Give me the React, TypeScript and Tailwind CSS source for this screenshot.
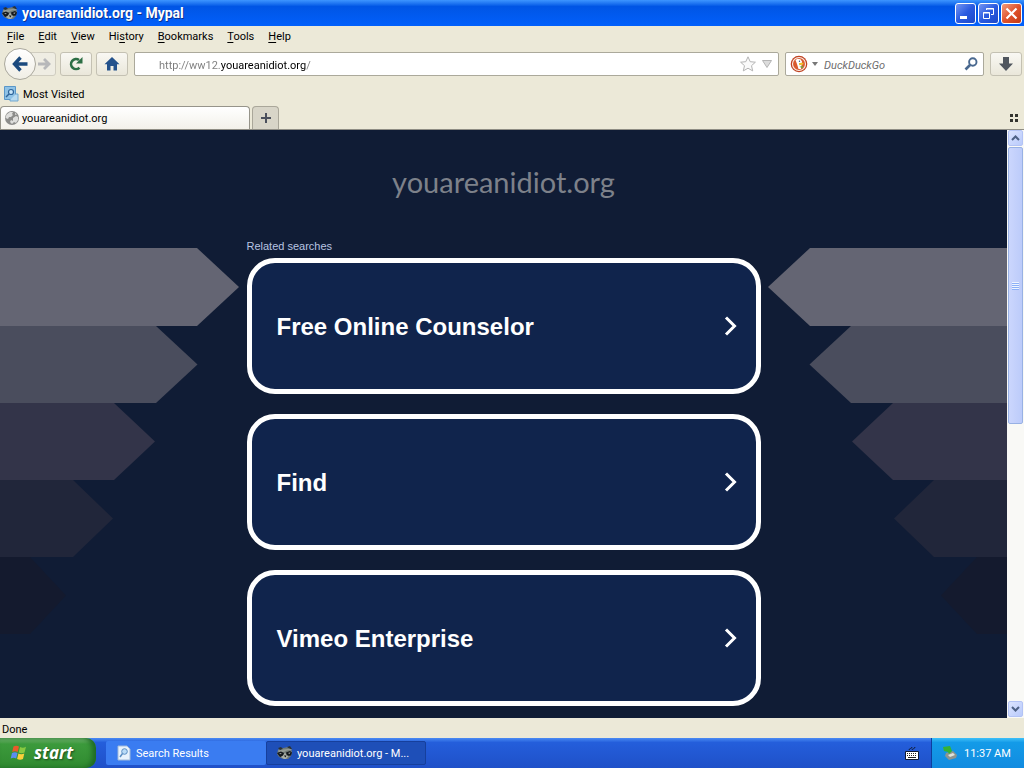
import React from 'react';

const menus = ['File', 'Edit', 'View', 'History', 'Bookmarks', 'Tools', 'Help'];
const mnemonicAt: Record<string, number> = { History: 2 };
const results = ['Free Online Counselor', 'Find', 'Vimeo Enterprise'];

function Raccoon() {
  return (
    <svg viewBox="0 0 16 16" className="size-4 shrink-0" aria-hidden="true">
      <path d="M1 5l2-2h3l5-1 3 1 1 4-1 4-3 3H6L2 12 0 9z" fill="#6f7975" />
      <path d="M1 3l3-1 2 2-3 1zM10 2l3-1 2 3-2 0z" fill="#2a3236" />
      <path d="M1 5.500l5-1 7-.8 2 1.300-5 .6-3 1.400-5 .6z" fill="#929a94" />
      <path d="M0 8l4-1.500L7 8l-1 3-3 1zM9 7.500L13 6l2 1.500-1 3-4 .5z" fill="#14191d" />
      <path d="M2 8.500l2.500-.3-.5 1zM11 8l2.500-.5-1 1.200z" fill="#d8dcd4" />
      <path d="M6.500 10L8 7.500 9.500 10l2 1-2.500 3H7L4 12z" fill="#a9b0a8" />
      <path d="M7 10.500h2.500L8.300 12.500z" fill="#111" />
    </svg>
  );
}

function Globe() {
  return (
    <svg viewBox="0 0 16 16" className="size-4 shrink-0" aria-hidden="true">
      <circle cx="8" cy="8" r="7" fill="#8c8c8a" />
      <path d="M2.500 4.500L6 2l3 0-1 2 1 1-2 2-2 0-1 2-2.500-1zM9 8l3-2 2 1 0 3-2 3-2-1-2 2-2-2 1-2 2 1z" fill="#dededc" />
      <path d="M11 2.500l2 2-2 .5z" fill="#d4d4d2" />
    </svg>
  );
}

function Duck() {
  return (
    <svg viewBox="0 0 18 18" className="size-[18px]" aria-hidden="true">
      <circle cx="9" cy="9" r="8.300" fill="#bf4322" />
      <circle cx="9" cy="9" r="6.500" fill="#da5a2e" stroke="#fbeee8" strokeWidth="1.100" />
      <path d="M5.500 5l2-1.200 3 .5 1.500 2.200-.3 2.500-.7 5-2.500 0-1.500-5z" fill="#fff" />
      <circle cx="9.500" cy="6.300" r=".7" fill="#28517c" />
      <path d="M9 8l4.500-.2-.3 1.800-4 .7z" fill="#f0c02c" />
      <path d="M9.500 11.800l3.500-1-.4 2.800z" fill="#6ba544" />
    </svg>
  );
}

function WindowsFlag() {
  return (
    <svg viewBox="0 0 18 18" className="size-[18px]" aria-hidden="true">
      <path d="M3.500 2.500c2-1.200 3.800-1 5.500 0L7.700 8C6 7 4 7 2.200 8z" fill="#ea5a2b" />
      <path d="M10 3c2 1 3.800 1 6-.2L14.500 8.500c-2 1-4 .9-5.800 0z" fill="#88c941" />
      <path d="M2 9c2-1 3.800-1 5.500 0l-1.300 5.500c-1.700-1-3.600-1-5.500 0z" fill="#5b8df0" />
      <path d="M8.400 9.500c2 1 3.900 1 5.900 0L13 15c-2 1-4 1-5.900 0z" fill="#fbd03b" />
    </svg>
  );
}

function Arrows({ side }: { side: 'left' | 'right' }) {
  return (
    <svg
      viewBox="0 0 240 388"
      aria-hidden="true"
      className={
        side === 'left'
          ? 'absolute left-0 top-[118px] h-[388px] w-[240px]'
          : 'absolute right-0 top-[118px] h-[388px] w-[240px] -scale-x-100'
      }
    >
      <path d="M0 0H197L239 39L197 78H0z" fill="#646573" />
      <path d="M0 78H156L197.500 116.500L156 155H0z" fill="#4a4d5d" />
      <path d="M0 155H114L155 193.500L114 232H0z" fill="#333449" />
      <path d="M0 232H73L113 270.500L73 309H0z" fill="#21263a" />
      <path d="M0 309H30L66 347.500L30 386H0z" fill="#141a2e" />
    </svg>
  );
}

const toolButton =
  'flex h-6 w-8 items-center justify-center rounded-[3px] border border-[#c4c1b3] bg-linear-to-b from-[#f9f8f3] to-[#eae7da]';
const captionButton =
  'flex size-[21px] items-center justify-center rounded-[3px] border border-white';
const scrollButton =
  'flex h-4 w-[15px] items-center justify-center rounded-[2px] border border-[#b3c3f5] bg-linear-to-br from-[#dbe4ff] to-[#b9cafb]';

function TitleBar() {
  return (
    <header className="flex h-[26px] shrink-0 items-center gap-1 bg-linear-to-b from-[#3d95ff] via-[#0055e5] via-25% to-[#0260fb] pl-0.5 pr-0.5">
      <Raccoon />
      <h1 className="flex-1 font-['Roboto','Noto_Sans',sans-serif] text-[14px] font-bold text-white [text-shadow:1px_1px_#0a3391]">
        youareanidiot.org - Mypal
      </h1>
      <div className="flex gap-0.5">
        <button aria-label="Minimize" className={`${captionButton} bg-linear-to-br from-[#7494f2] via-[#2a5ae0] to-[#1c48c9]`}>
          <svg viewBox="0 0 19 19" className="size-[19px]"><path d="M4 12h7v3H4z" fill="#fff" /></svg>
        </button>
        <button aria-label="Restore" className={`${captionButton} bg-linear-to-br from-[#7494f2] via-[#2a5ae0] to-[#1c48c9]`}>
          <svg viewBox="0 0 19 19" className="size-[19px]" fill="none" stroke="#fff">
            <path d="M7.500 6V4.500h7v6H12M7 5h8" />
            <path d="M4.500 8.500h6v6h-6zM4 9h7" />
          </svg>
        </button>
        <button aria-label="Close" className={`${captionButton} bg-linear-to-br from-[#f09a7c] via-[#e0532c] to-[#c43a12]`}>
          <svg viewBox="0 0 19 19" className="size-[19px]"><path d="M4.500 4.500l10 10M14.500 4.500l-10 10" stroke="#fff" strokeWidth="2.200" /></svg>
        </button>
      </div>
    </header>
  );
}

function MenuBar() {
  return (
    <nav className="flex h-5 shrink-0 items-center gap-3.5 pl-[7px] pt-0.5">
      {menus.map((m) => {
        const i = mnemonicAt[m] ?? 0;
        return (
          <button key={m}>
            {m.slice(0, i)}
            <u className="underline-offset-2">{m[i]}</u>
            {m.slice(i + 1)}
          </button>
        );
      })}
    </nav>
  );
}

function NavBar() {
  return (
    <div className="flex h-9 shrink-0 items-center gap-1.5 pl-1 pr-0.5">
      <div className="flex items-center gap-1">
        <div className="flex items-center">
          <button aria-label="Back" className="z-10 flex size-8 items-center justify-center rounded-full border border-[#aaa89d] bg-linear-to-b from-white to-[#f0eee5]">
            <svg viewBox="0 0 16 16" className="size-4"><path d="M8.500 1.500L2.500 8l6 6.500M3 8h12.500" fill="none" stroke="#1b4a7e" strokeWidth="3.400" /></svg>
          </button>
          <button aria-label="Forward" className="-ml-2 flex h-6 w-7 items-center justify-center rounded-r-[3px] border border-[#d0cdc0] bg-[#efede3] pl-1">
            <svg viewBox="0 0 14 14" className="size-3.5"><path d="M7 2l5 5-5 5M11.500 7H1" fill="none" stroke="#b7b8ba" strokeWidth="2.800" /></svg>
          </button>
        </div>
        <button aria-label="Reload" className={toolButton}>
          <svg viewBox="0 0 16 16" className="size-4">
            <path d="M11.500 11.700A5 5 0 1 1 11 4" fill="none" stroke="#2c6e44" strokeWidth="2.600" />
            <path d="M14.500 1v6.500H8z" fill="#2c6e44" />
          </svg>
        </button>
        <button aria-label="Home" className={toolButton}>
          <svg viewBox="0 0 16 16" className="size-4"><path d="M8 1l7.500 7.300H13V14.500H9.500V10h-3v4.500H3V8.300H.5z" fill="#24528c" /></svg>
        </button>
      </div>
      <label className="flex h-6 flex-1 items-center rounded-[2px] border border-[#aba99b] bg-white pl-6 pr-1.5">
        <span className="sr-only">Address</span>
        <input
          defaultValue="http://ww12.youareanidiot.org/"
          className="h-full min-w-0 flex-1 bg-[linear-gradient(90deg,#7b7b7b_61px,#000_61px,#000_147px,#7b7b7b_147px)] bg-clip-text pt-0.5 leading-4 text-transparent caret-black outline-none"
        />
        <svg viewBox="0 0 16 16" className="size-4" aria-hidden="true">
          <path d="M8 .8l2.200 4.900 5.200.5-3.900 3.500 1.200 5.200L8 12.200l-4.700 2.700 1.200-5.200L.6 6.200l5.200-.5z" fill="#fafafa" stroke="#b4b4b4" />
        </svg>
        <svg viewBox="0 0 10 8" className="ml-1.5 h-2 w-2.5" aria-hidden="true"><path d="M.5.500h9L5 7.500z" fill="#dcdcdc" stroke="#b4b4b4" /></svg>
      </label>
      <label className="flex h-6 w-[199px] items-center rounded-[2px] border border-[#aba99b] bg-white pl-1 pr-[5px]">
        <span className="sr-only">Search</span>
        <Duck />
        <svg viewBox="0 0 6 4" className="ml-1 h-1 w-1.5" aria-hidden="true"><path d="M0 0h6L3 4z" fill="#777" /></svg>
        <input placeholder="DuckDuckGo" className="ml-1.5 h-full min-w-0 flex-1 bg-transparent pt-0.5 italic leading-4 outline-none placeholder:text-[#6e6e6e]" />
        <svg viewBox="0 0 14 14" className="size-3.5" aria-hidden="true">
          <circle cx="8.800" cy="5" r="3.700" fill="none" stroke="#49688f" strokeWidth="1.900" />
          <path d="M6 8l-4.500 4.500" stroke="#49688f" strokeWidth="2.600" />
        </svg>
      </label>
      <button aria-label="Downloads" className={toolButton}>
        <svg viewBox="0 0 16 16" className="size-4"><path d="M5 1h6v6.500h4L8 15 1 7.500h4z" fill="#50565e" /></svg>
      </button>
    </div>
  );
}

function TabStrip() {
  return (
    <div className="flex h-6 shrink-0 items-end justify-between border-b border-[#8f8d84]">
      <div className="flex items-end gap-0.5">
        <button className="flex h-[23px] w-[250px] items-center gap-0.5 rounded-t-[4px] border border-b-0 border-[#96948a] bg-linear-to-b from-white to-[#f3f1ea] pl-[3px]">
          <Globe />
          <span className="pt-0.5">youareanidiot.org</span>
        </button>
        <button aria-label="New tab" className="flex h-[23px] w-[27px] items-center justify-center rounded-t-[4px] border border-b-0 border-[#aaa79a] bg-[#d8d5c8]">
          <svg viewBox="0 0 10 10" className="size-2.5"><path d="M5 0v10M0 5h10" stroke="#4a4f5c" strokeWidth="2" /></svg>
        </button>
      </div>
      <button aria-label="Tab groups" className="flex h-full items-center pr-[5px]">
        <svg viewBox="0 0 10 10" className="size-2.5"><path d="M1 1h3v3H1zM6 1h3v3H6zM1 6h3v3H1zM6 6h3v3H6z" fill="#33332e" /></svg>
      </button>
    </div>
  );
}

function ScrollBar() {
  return (
    <div className="flex w-[17px] shrink-0 flex-col items-center bg-[#f9f9f6] pb-px">
      <button aria-label="Scroll up" className={scrollButton}>
        <svg viewBox="0 0 9 6" className="h-1.5 w-[9px]"><path d="M1 5l3.500-3.500L8 5" fill="none" stroke="#4d6185" strokeWidth="2" /></svg>
      </button>
      <div className="flex w-full flex-1 flex-col items-center pt-px">
        <div className="flex h-1/2 w-[15px] items-center justify-center rounded-[2px] border border-[#98b1e4] bg-linear-to-r from-[#cbd6fd] to-[#bccbfa]">
          <svg viewBox="0 0 7 8" className="h-2 w-[7px]"><path d="M0 .5h7M0 2.500h7M0 4.500h7M0 6.500h7" stroke="#eef4fe" /><path d="M0 1.500h7M0 3.500h7M0 5.500h7M0 7.500h7" stroke="#8cb0f8" /></svg>
        </div>
      </div>
      <button aria-label="Scroll down" className={scrollButton}>
        <svg viewBox="0 0 9 6" className="h-1.5 w-[9px]"><path d="M1 1l3.500 3.500L8 1" fill="none" stroke="#4d6185" strokeWidth="2" /></svg>
      </button>
    </div>
  );
}

function Taskbar() {
  return (
    <footer className="flex h-[30px] shrink-0 items-stretch bg-linear-to-b from-[#4a8af3] via-[#245edb] via-15% to-[#1f50c8] text-white">
      <button className="flex w-24 items-center gap-1.5 rounded-r-[10px] bg-linear-to-b from-[#74b974] via-[#3c9a3c] via-20% to-[#2f8a30] pl-2.5 font-['Open_Sans','Noto_Sans',sans-serif] text-[17px] font-bold italic shadow-[inset_-4px_0_5px_#1f6b24] [text-shadow:1px_1px_2px_#1b4a1d]">
        <WindowsFlag />
        start
      </button>
      <div className="ml-2.5 flex flex-1 py-[3px]">
        <button className="flex w-[160px] items-center gap-1 rounded-[2px] bg-[#3a7cf1] pl-2.5">
          <svg viewBox="0 0 16 16" className="size-4">
            <path d="M2 1h9l3 3v11H2z" fill="#e8f2fc" stroke="#9fb9da" />
            <circle cx="8.500" cy="6.500" r="2.800" fill="#b9dbf7" stroke="#5b8ec4" />
            <path d="M6.500 8.500L4 12" stroke="#5b8ec4" strokeWidth="1.500" />
          </svg>
          <span className="pt-0.5">Search Results</span>
        </button>
        <button className="flex w-[160px] items-center gap-1 rounded-[2px] border border-[#163f9c] bg-[#1e4fb8] pl-2.5">
          <Raccoon />
          <span className="pt-0.5">youareanidiot.org - M...</span>
        </button>
      </div>
      <div className="flex items-center pr-3">
        <svg viewBox="0 0 14 14" className="size-3.5" aria-label="Keyboard">
          <path d="M4 4c0-2 3-1 3-3M7 4c0-1.500 3-1 3-3" fill="none" stroke="#111b33" />
          <path d="M.5 5.500h13v8H.5z" fill="#fff" stroke="#0f1a33" />
          <path d="M2 7.500h10M2 9.500h10" stroke="#222" strokeDasharray="1 1" />
          <path d="M3 11.500h8" stroke="#222" />
        </svg>
      </div>
      <div className="flex w-[93px] items-center gap-1.5 border-l border-[#0d3f9e] bg-linear-to-b from-[#3cc0f8] via-[#139be8] via-15% to-[#128be0] pl-2.5">
        <svg viewBox="0 0 16 16" className="size-4" aria-hidden="true">
          <path d="M4 8l7-2 4 4-1 3-7 2-4-4z" fill="#8d958f" />
          <path d="M6 10l5-2 2 2-5 2z" fill="#dfe3dc" />
          <path d="M1 2l7-1 2 5-3 3-1-2-4-1z" fill="#35b233" />
        </svg>
        <span className="pt-0.5">11:37 AM</span>
      </div>
    </footer>
  );
}

export default function App() {
  return (
    <div className="flex h-screen flex-col overflow-hidden bg-[#ece9d8] font-['Roboto','Noto_Sans',sans-serif] text-[11px] leading-4 text-black">
      <TitleBar />
      <MenuBar />
      <NavBar />
      <div className="flex h-6 shrink-0 items-center pl-[3px]">
        <button className="flex items-center gap-1">
          <svg viewBox="0 0 16 16" className="size-4">
            <path d="M1.500.5h11v13h-11z" fill="#8fc2e6" stroke="#5a97c8" />
            <path d="M13 8h2v7H7v-1" fill="#b8daf0" stroke="#70a8d0" />
            <circle cx="8" cy="6" r="2.500" fill="#c8e6fa" stroke="#2e6499" strokeWidth="1.200" />
            <path d="M6 8l-3 3" stroke="#2e6499" strokeWidth="1.500" />
          </svg>
          <span className="pt-0.5">Most Visited</span>
        </button>
      </div>
      <TabStrip />
      <div className="flex min-h-0 flex-1">
        <main className="relative flex-1 overflow-hidden bg-[#101c35] font-['Liberation_Sans',Arial,sans-serif]">
          <Arrows side="left" />
          <Arrows side="right" />
          <div className="relative mx-auto flex w-full max-w-[514px] flex-col">
            <h2 className="pt-8 text-center font-['Lato',sans-serif] text-[29px] leading-10 text-[#7d818a]">youareanidiot.org</h2>
            <p className="pb-1 pt-9 text-[11px] leading-4 text-[#b9c4e2]">Related searches</p>
            <div className="flex flex-col gap-5">
              {results.map((r) => (
                <a key={r} href="#" className="flex h-[136px] items-center justify-between rounded-[28px] border-5 border-white bg-[#10244c] pl-[25px] pr-[18px] text-[24px] font-bold leading-8 text-white">
                  <span className="pt-0.5">{r}</span>
                  <svg viewBox="0 0 14 20" className="h-5 w-3.5" aria-hidden="true"><path d="M2 1.500l8.500 8.500L2 18.500" fill="none" stroke="#fff" strokeWidth="3" /></svg>
                </a>
              ))}
            </div>
          </div>
        </main>
        <ScrollBar />
      </div>
      <div className="flex h-5 shrink-0 items-center pl-0.5 pt-1">Done</div>
      <Taskbar />
    </div>
  );
}
